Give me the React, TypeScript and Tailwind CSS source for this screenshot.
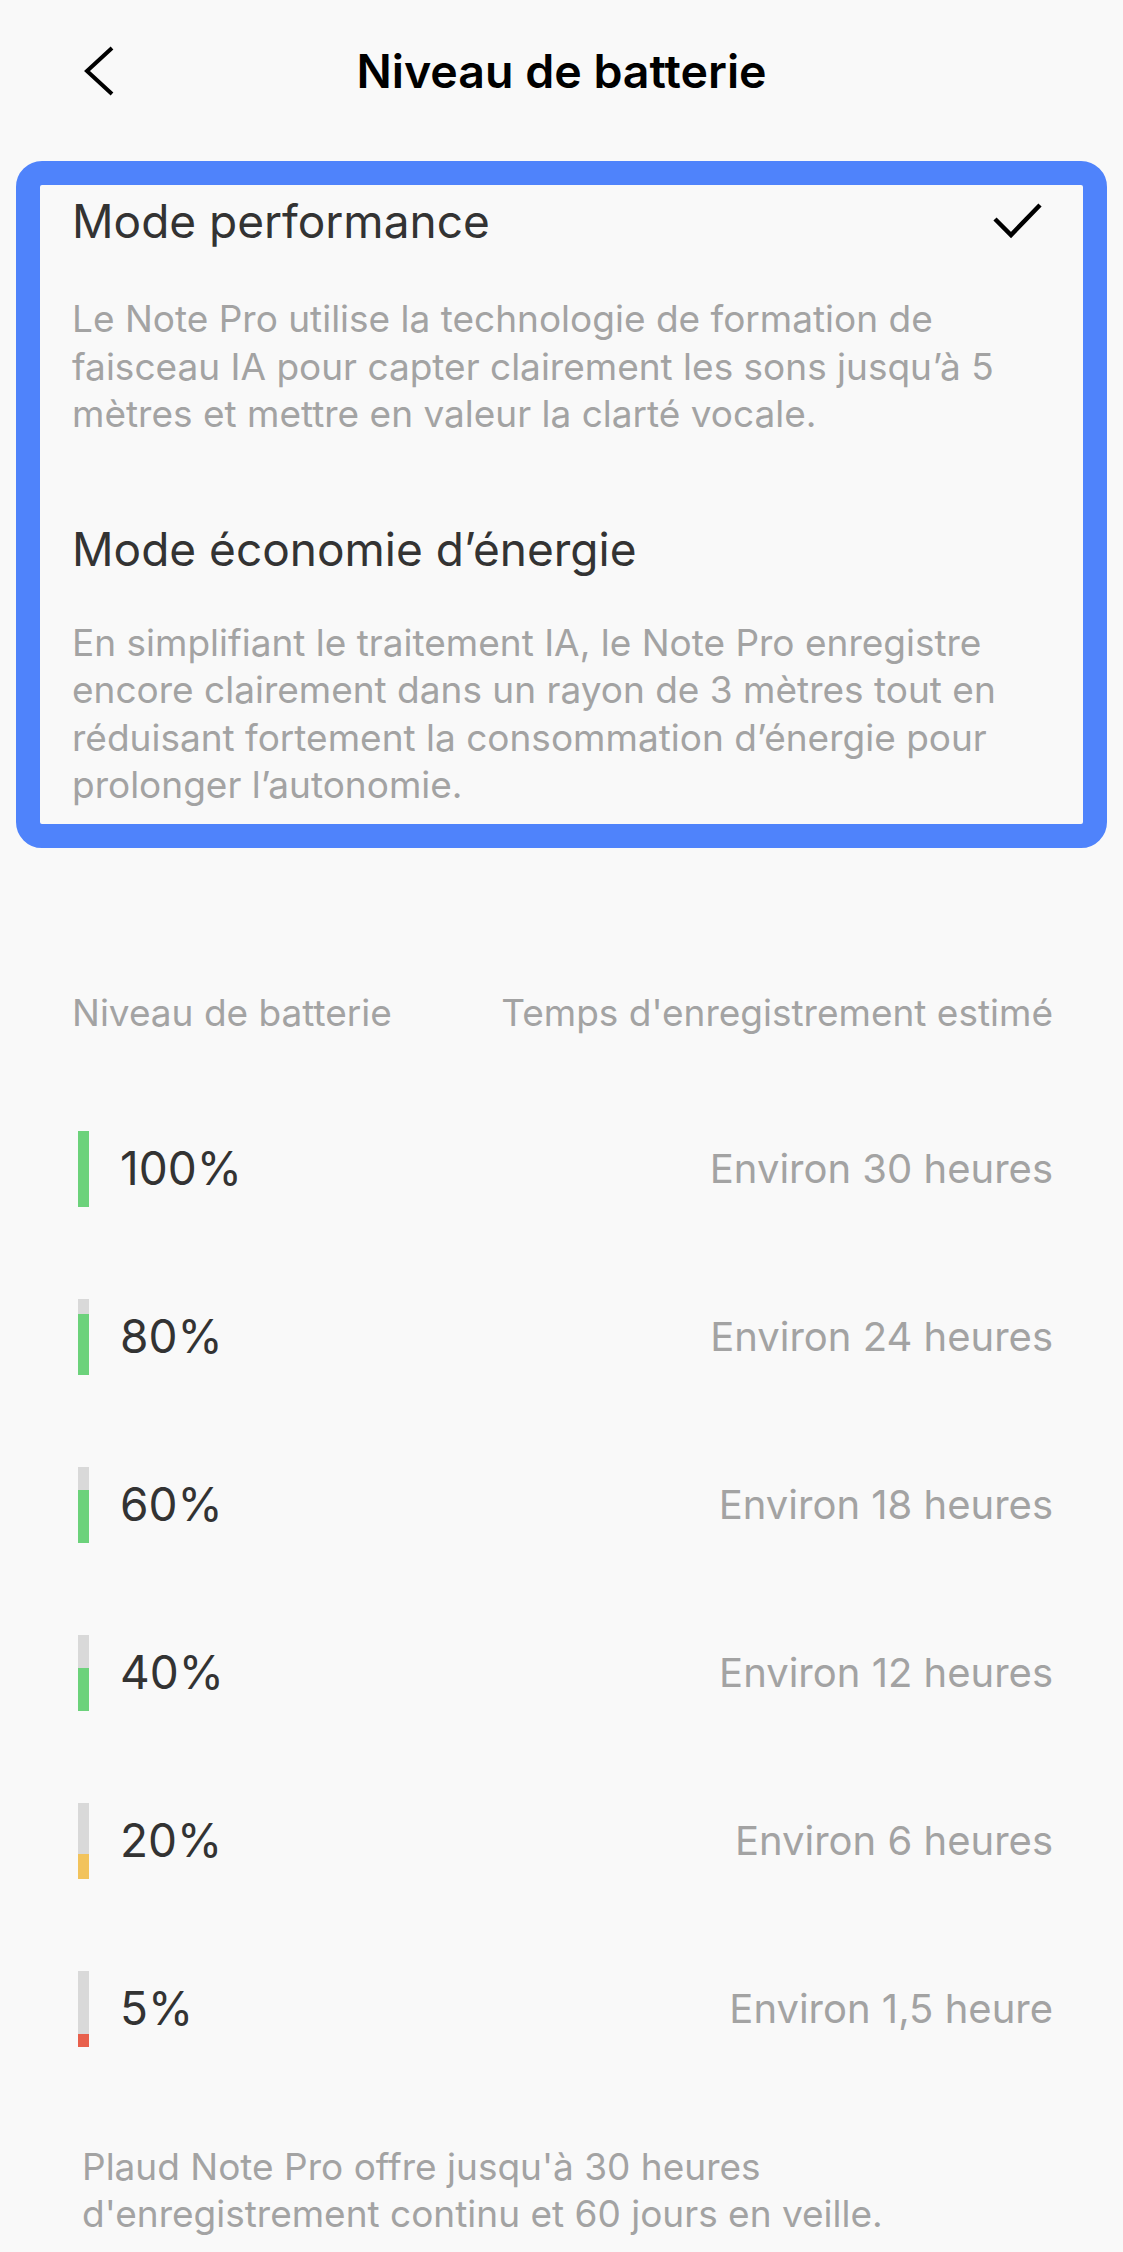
import React from "react";

const rows = [
  { label: "100%", time: "Environ 30 heures", fill: 76, color: "bg-[#6cd27b]" },
  { label: "80%", time: "Environ 24 heures", fill: 61, color: "bg-[#6cd27b]" },
  { label: "60%", time: "Environ 18 heures", fill: 53, color: "bg-[#6cd27b]" },
  { label: "40%", time: "Environ 12 heures", fill: 43, color: "bg-[#6cd27b]" },
  { label: "20%", time: "Environ 6 heures", fill: 25, color: "bg-[#f2c35c]" },
  { label: "5%", time: "Environ 1,5 heure", fill: 13, color: "bg-[#e8604c]" },
];

function BatteryBar({ fill, color }: { fill: number; color: string }) {
  return (
    <div className="flex h-[76px] w-[11px] flex-col justify-end bg-[#d9d9d9]">
      <div className={color} style={{ height: fill }} />
    </div>
  );
}

export default function App() {
  return (
    <div className="min-h-[2252px] w-full bg-[#f9f9f9] font-['Inter',sans-serif] text-[#333]">
      {/* header */}
      <div className="grid h-[142px] grid-cols-[1fr_auto_1fr] items-center">
        <div className="pl-[84px] pt-[2px]">
          <svg width="32" height="52" viewBox="0 0 32 52" fill="none">
            <polyline points="28,2 3,25 28,48" stroke="#000" strokeWidth="4" strokeLinejoin="miter" />
          </svg>
        </div>
        <h1 className="text-[46.5px] font-semibold leading-[56px] text-black">Niveau de batterie</h1>
        <div />
      </div>

      {/* modes */}
      <div className="mx-[16px] mt-[19px] rounded-[26px] border-[24px] border-[#4f83fb]">
        <div className="pb-[15px] pl-[32px] pr-[40px] pt-[8px]">
          <div className="flex items-center justify-between">
            <div className="text-[46px] leading-[56px]">Mode performance</div>
            <svg width="50" height="40" viewBox="0 0 50 40" fill="none">
              <polyline points="2,18 18,34 47,4" stroke="#000" strokeWidth="4.5" />
            </svg>
          </div>
          <p className="mt-[46px] whitespace-nowrap text-[37px] leading-[47.5px] text-[#a3a3a3]">
            Le Note Pro utilise la technologie de formation de
            <br />
            faisceau IA pour capter clairement les sons jusqu’à 5
            <br />
            mètres et mettre en valeur la clarté vocale.
          </p>
          <div className="mt-[83px] text-[46px] leading-[56px]">Mode économie d’énergie</div>
          <p className="mt-[42px] whitespace-nowrap text-[37px] leading-[47.5px] text-[#a3a3a3]">
            En simplifiant le traitement IA, le Note Pro enregistre
            <br />
            encore clairement dans un rayon de 3 mètres tout en
            <br />
            réduisant fortement la consommation d’énergie pour
            <br />
            prolonger l’autonomie.
          </p>
        </div>
      </div>

      {/* table */}
      <div className="mt-[137px] flex h-[56px] items-center justify-between pl-[72px] pr-[70px] text-[37px] text-[#a3a3a3]">
        <span>Niveau de batterie</span>
        <span>Temps d'enregistrement estimé</span>
      </div>
      <div className="mt-[44px] pl-[78px] pr-[70px]">
        {rows.map((r) => (
          <div key={r.label} className="flex h-[168px] items-center">
            <BatteryBar fill={r.fill} color={r.color} />
            <span className="ml-[31px] text-[46px]">{r.label}</span>
            <span className="ml-auto text-[40px] text-[#a3a3a3]">{r.time}</span>
          </div>
        ))}
      </div>

      <p className="mt-[50px] whitespace-nowrap pl-[82px] pr-[70px] text-[37px] leading-[47px] text-[#a3a3a3]">
        Plaud Note Pro offre jusqu'à 30 heures
        <br />
        d'enregistrement continu et 60 jours en veille.
      </p>
    </div>
  );
}
